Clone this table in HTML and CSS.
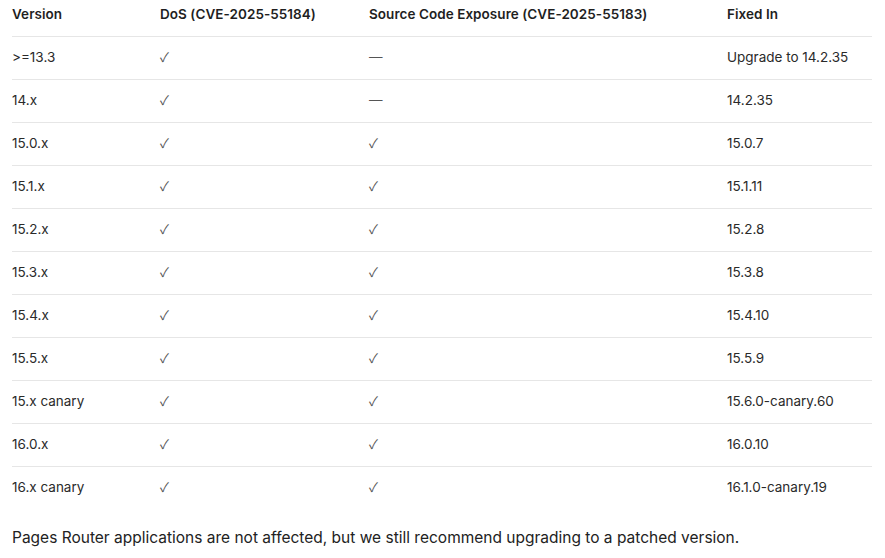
FILE: index.html
```html
<!DOCTYPE html>
<html>
<head>
<meta charset="utf-8">
<link rel="stylesheet" href="styles.css">
</head>
<body>
<div class="wrap">
<table class="vt">
<colgroup><col class="c1"><col class="c2"><col class="c3"><col class="c4"></colgroup>
<thead>
<tr><th>Version</th><th>DoS (CVE-2025-55184)</th><th>Source Code Exposure (CVE-2025-55183)</th><th>Fixed In</th></tr>
</thead>
<tbody>
<tr><td>&gt;=13.3</td><td class="m">✓</td><td class="d">—</td><td>Upgrade to 14.2.35</td></tr>
<tr><td>14.x</td><td class="m">✓</td><td class="d">—</td><td>14.2.35</td></tr>
<tr><td>15.0.x</td><td class="m">✓</td><td class="m">✓</td><td>15.0.7</td></tr>
<tr><td>15.1.x</td><td class="m">✓</td><td class="m">✓</td><td>15.1.11</td></tr>
<tr><td>15.2.x</td><td class="m">✓</td><td class="m">✓</td><td>15.2.8</td></tr>
<tr><td>15.3.x</td><td class="m">✓</td><td class="m">✓</td><td>15.3.8</td></tr>
<tr><td>15.4.x</td><td class="m">✓</td><td class="m">✓</td><td>15.4.10</td></tr>
<tr><td>15.5.x</td><td class="m">✓</td><td class="m">✓</td><td>15.5.9</td></tr>
<tr><td>15.x canary</td><td class="m">✓</td><td class="m">✓</td><td>15.6.0-canary.60</td></tr>
<tr><td>16.0.x</td><td class="m">✓</td><td class="m">✓</td><td>16.0.10</td></tr>
<tr><td>16.x canary</td><td class="m">✓</td><td class="m">✓</td><td>16.1.0-canary.19</td></tr>
</tbody>
</table>
<p class="note">Pages Router applications are not affected, but we still recommend upgrading to a patched version.</p>
</div>
</body>
</html>
```
FILE: styles.css
```css
html, body { margin: 0; padding: 0; background: #fff; }
body { font-family: Inter, "Noto Sans", sans-serif; color: #222; }
.wrap { padding: 0 13px 0 12px; }
.vt { width: 860px; border-collapse: collapse; table-layout: fixed; font-size: 13.5px; }
.c1 { width: 148px; }
.c2 { width: 209px; }
.c3 { width: 358px; }
.c4 { width: 145px; }
.vt th { text-align: left; font-weight: 600; color: #1f1f1f; line-height: 20px; padding: 4px 0 12px 0; border-bottom: 1px solid #e6e6e6; letter-spacing: 0.05px; }
.vt td { line-height: 20px; padding: 10px 0 12px; border-bottom: 1px solid #e6e6e6; color: #2a2a2a; }
.vt tbody tr:last-child td { border-bottom: none; }
.vt td.m { color: #555; font-family: "Noto Sans CJK SC", sans-serif; font-size: 13px; }
.vt td.d { color: #555; }
.note { margin: 17px 0 0; font-size: 15.5px; line-height: 24px; color: #222; }
```
